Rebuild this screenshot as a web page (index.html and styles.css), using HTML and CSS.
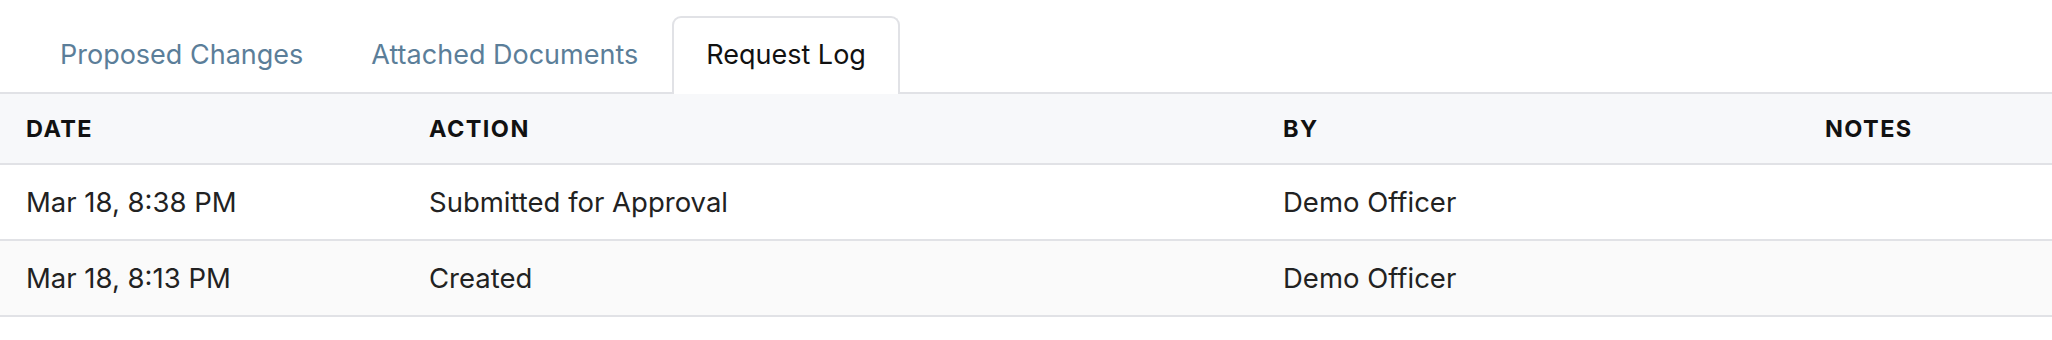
FILE: index.html
```html
<!DOCTYPE html>
<html lang="en">
<head>
  <meta charset="UTF-8">
  <meta name="viewport" content="width=device-width, initial-scale=1.0">
  <title>Request Log</title>
  <link rel="stylesheet" href="styles.css">
</head>
<body>
  <div class="request-panel">
    <nav class="tabs">
      <button class="tab">Proposed Changes</button>
      <button class="tab">Attached Documents</button>
      <button class="tab active">Request Log</button>
    </nav>

    <table class="log-table">
      <colgroup>
        <col class="col-date">
        <col class="col-action">
        <col class="col-by">
        <col class="col-notes">
      </colgroup>
      <thead>
        <tr>
          <th>Date</th>
          <th>Action</th>
          <th>By</th>
          <th>Notes</th>
        </tr>
      </thead>
      <tbody>
        <tr>
          <td>Mar 18, 8:38 PM</td>
          <td>Submitted for Approval</td>
          <td>Demo Officer</td>
          <td></td>
        </tr>
        <tr>
          <td>Mar 18, 8:13 PM</td>
          <td>Created</td>
          <td>Demo Officer</td>
          <td></td>
        </tr>
      </tbody>
    </table>
  </div>
</body>
</html>
```

FILE: styles.css
```css
:root {
  --line: #e1e2e6;
  --tab-text: #5b7e99;
  --text: #222;
  --head-bg: #f7f8fa;
  --stripe: #fafafa;
}

* {
  margin: 0;
  padding: 0;
  box-sizing: border-box;
}

body {
  background: white;
  color: var(--text);
  font-family: Inter, 'Liberation Sans', sans-serif;
}

.request-panel {
  padding-top: 16px;
}

/* tab strip */
.tabs {
  display: flex;
  align-items: flex-end;
  height: 78px;
  padding: 0 26px;
  border-bottom: 2px solid var(--line);
}

.tab {
  font-family: inherit;
  font-size: 27px;
  line-height: 74px;
  padding: 0 32px;
  color: var(--tab-text);
  background: none;
  border: 2px solid transparent;
  border-bottom: none;
  cursor: pointer;
}

.tab.active {
  color: #111;
  background: white;
  border-color: var(--line);
  border-radius: 9px 9px 0 0;
  padding-bottom: 2px;
  margin-bottom: -2px;
}

/* log table */
.log-table {
  width: 100%;
  table-layout: fixed;
  border-collapse: separate;
  border-spacing: 0;
}

.col-date { width: 403px; }
.col-action { width: 854px; }
.col-by { width: 542px; }

.log-table th,
.log-table td {
  text-align: left;
  padding: 0 26px;
  border-bottom: 2px solid var(--line);
  white-space: nowrap;
}

.log-table th {
  background: var(--head-bg);
  color: #111;
  font-size: 23.5px;
  font-weight: 700;
  letter-spacing: 0.06em;
  text-transform: uppercase;
  line-height: 69px;
}

.log-table td {
  font-size: 27.5px;
  line-height: 74px;
}

.log-table tbody tr:nth-child(even) td {
  background: var(--stripe);
}
```
